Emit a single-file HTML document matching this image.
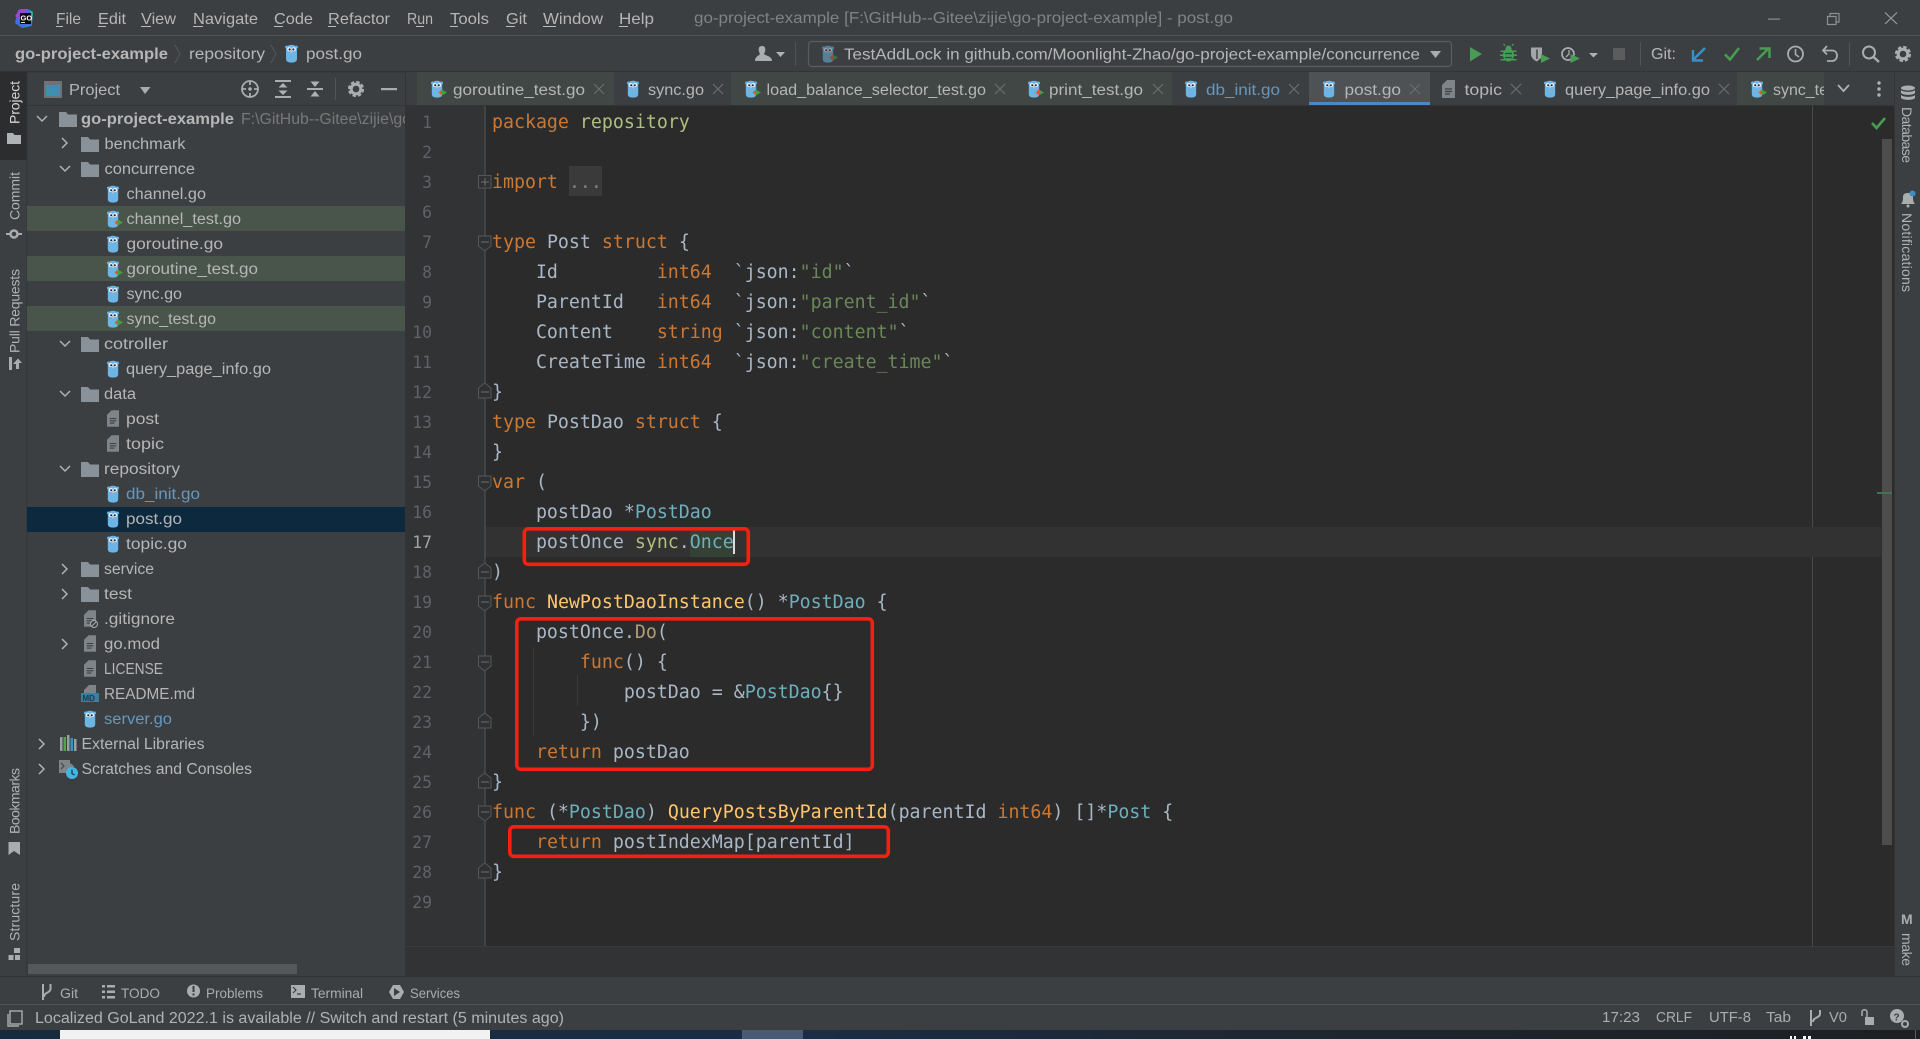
<!DOCTYPE html>
<html><head><meta charset="utf-8"><title>go-project-example - post.go</title>
<style>
html,body{margin:0;padding:0;background:#3c3f41;overflow:hidden}
svg{display:block}
text{font-family:"Liberation Sans",sans-serif;font-size:15.5px;fill:#b6b6b6;white-space:pre}
.m{font-size:16px;fill:#b6b6b6}
.b{font-weight:bold}
.dim{fill:#787878}
.bl{fill:#6897bb}
.sm{font-size:14px;fill:#a9adb0}
.v{font-size:14px;fill:#b0b2b4}
.c{font-family:"DejaVu Sans Mono","Liberation Mono",monospace;font-size:18.25px;fill:#a9b7c6}
.n{font-family:"DejaVu Sans Mono","Liberation Mono",monospace;font-size:16.4px;fill:#606366;text-anchor:end}
.k{fill:#cc7832}.t{fill:#6fafbd}.f{fill:#ffc66d}.s{fill:#6a8759}.p{fill:#afbf7e}.d{fill:#b09d79}.g{fill:#808080}
.x{stroke:#6c6e70;stroke-width:1.2;fill:none}
.ch{stroke:#afb1b3;stroke-width:1.5;fill:none}
.fold{fill:#2f3133;stroke:#55585a;stroke-width:1}
.ic{fill:#afb1b3}
</style></head>
<body>
<svg width="1920" height="1039" viewBox="0 0 1920 1039" xmlns="http://www.w3.org/2000/svg">
<defs>
<symbol id="go" viewBox="0 0 12 18"><circle cx="1.5" cy="3" r="1.5" fill="#6cb5e4"/><circle cx="10.5" cy="3" r="1.5" fill="#6cb5e4"/><path d="M6 .8C9.800 .8 11.200 3 11.200 6V14C11.200 16.500 9.500 17.600 6 17.600S.8 16.500 .8 14V6C.8 3 2.200 .8 6 .8Z" fill="#6cb5e4"/><circle cx="3.800" cy="5" r="2" fill="#eef"/><circle cx="8.200" cy="5" r="2" fill="#eef"/><circle cx="4.200" cy="5.200" r="1" fill="#222"/><circle cx="7.800" cy="5.200" r="1" fill="#222"/><rect x="5.200" y="6.800" width="1.600" height="1.400" fill="#d9c9a8"/></symbol>
<symbol id="gt" viewBox="0 0 17 18"><use href="#go" width="12" height="18"/><path d="M7.500 12.500L11 9.500V15.500Z" fill="#e0592a"/><path d="M11 9.500L16 12.500L11 15.500Z" fill="#4a9a46"/></symbol>
<symbol id="fo" viewBox="0 0 18 15"><path d="M0 0H7L9 2.500H18V15H0Z" fill="#899299"/></symbol>
<symbol id="fi" viewBox="0 0 13 18"><path d="M5 0H13V18H0V5Z" fill="#7e8488"/><path d="M3 9H10M3 11.500H10M3 14H8" stroke="#3c3f41" stroke-width="1.200"/></symbol>
</defs>

<!-- base -->
<rect width="1920" height="1039" fill="#3c3f41"/>
<rect x="0" y="35" width="1920" height="1" fill="#505254"/>
<rect x="0" y="71" width="1920" height="1.500" fill="#323436"/>

<!-- logo -->
<path d="M18 10L28 9L33 12L32 26L22 28L15 23Z" fill="#3f6fe0"/><path d="M15 16L20 9L28 9L20 20Z" fill="#9b45d6"/><path d="M30 10L33 12L32 22L28 26L22 28L30 24Z" fill="#28b79a"/>
<rect x="20" y="13" width="11" height="11" fill="#0b0b0b"/><text x="20.500" y="20.500" style="font-size:7.500px;font-weight:bold;fill:#fff">GO</text><rect x="21" y="22" width="4" height="1" fill="#ddd"/>

<!-- menu -->
<text class="m" x="56" y="24" textLength="25" lengthAdjust="spacingAndGlyphs">File</text>
<text class="m" x="98" y="24" textLength="28" lengthAdjust="spacingAndGlyphs">Edit</text>
<text class="m" x="141" y="24" textLength="35" lengthAdjust="spacingAndGlyphs">View</text>
<text class="m" x="193" y="24" textLength="65" lengthAdjust="spacingAndGlyphs">Navigate</text>
<text class="m" x="274" y="24" textLength="39" lengthAdjust="spacingAndGlyphs">Code</text>
<text class="m" x="328" y="24" textLength="62" lengthAdjust="spacingAndGlyphs">Refactor</text>
<text class="m" x="407" y="24" textLength="26" lengthAdjust="spacingAndGlyphs">Run</text>
<text class="m" x="450" y="24" textLength="39" lengthAdjust="spacingAndGlyphs">Tools</text>
<text class="m" x="506" y="24" textLength="21" lengthAdjust="spacingAndGlyphs">Git</text>
<text class="m" x="543" y="24" textLength="60" lengthAdjust="spacingAndGlyphs">Window</text>
<text class="m" x="619" y="24" textLength="35" lengthAdjust="spacingAndGlyphs">Help</text>
<g fill="#bbbbbb"><rect x="56" y="26" width="7" height="1"/><rect x="98" y="26" width="8" height="1"/><rect x="141" y="26" width="10" height="1"/><rect x="193" y="26" width="10" height="1"/><rect x="274" y="26" width="9" height="1"/><rect x="328" y="26" width="8" height="1"/><rect x="416" y="26" width="8" height="1"/><rect x="450" y="26" width="8" height="1"/><rect x="506" y="26" width="9" height="1"/><rect x="543" y="26" width="13" height="1"/><rect x="619" y="26" width="9" height="1"/></g>
<text x="694" y="23" textLength="539" lengthAdjust="spacingAndGlyphs" style="font-size:16px;fill:#808284">go-project-example [F:\GitHub--Gitee\zijie\go-project-example] - post.go</text>
<!-- window controls -->
<rect x="1768" y="18.500" width="12" height="1.200" fill="#8d8f91"/>
<path d="M1830 16.500H1827.500V24.500H1836V22M1830 16.500V13.500H1839V22H1836M1830 16.500H1836V22" fill="none" stroke="#8d8f91" stroke-width="1.200"/>
<path d="M1885 12.500L1897 24M1897 12.500L1885 24" stroke="#9a9c9e" stroke-width="1.200"/>

<!-- breadcrumb row -->
<text class="b" x="15" y="59" textLength="153" lengthAdjust="spacingAndGlyphs">go-project-example</text>
<path d="M175 45L180 54L175 63" fill="none" stroke="#55585a"/>
<text x="189" y="59" textLength="76" lengthAdjust="spacingAndGlyphs">repository</text>
<path d="M271 45L276 54L271 63" fill="none" stroke="#55585a"/>
<use href="#go" x="285" y="44" width="13" height="19"/>
<text x="306" y="59" textLength="56" lengthAdjust="spacingAndGlyphs">post.go</text>

<!-- toolbar -->
<path d="M755 61C755 56 759 56 760 54C758 50 758 46 762 46C766 46 766 50 764 54C766 56 772 56 772 61Z" fill="#a9adb0"/><path d="M776 52H785L780.500 57Z" class="ic"/>
<rect x="795" y="42" width="1" height="24" fill="#515355"/>
<rect x="808.500" y="41.500" width="643" height="25" rx="3" fill="none" stroke="#5a5d5f" stroke-width="1.200"/>
<g opacity=".55"><use href="#gt" x="822" y="45" width="17" height="18"/></g>
<text x="844" y="59.500" textLength="576" lengthAdjust="spacingAndGlyphs">TestAddLock in github.com/Moonlight-Zhao/go-project-example/concurrence</text>
<path d="M1430 51H1441L1435.500 58Z" fill="#a9adb0"/>
<path d="M1470 47L1482 54L1470 61.500Z" fill="#499c54"/>
<g fill="#499c54"><ellipse cx="1508.500" cy="55" rx="5.500" ry="6.500"/><circle cx="1508.500" cy="48.500" r="3"/><path d="M1505 45.500L1503.500 44M1512 45.500L1513.500 44" stroke="#499c54" stroke-width="1.300"/><path d="M1500.500 50.500h16v1.500h-16zM1500 54.500h17v1.500h-17zM1500.500 59h16v1.500h-16z"/></g><path d="M1505 53.500h7M1505 57.500h7" stroke="#3c3f41" stroke-width="1.200"/>
<path d="M1531 47.500H1542V57L1537 61.500C1533 60 1531 57 1531 54Z" fill="#a3a6a8"/><path d="M1537 49.500V59" stroke="#3c3f41" stroke-width="1.400"/><path d="M1541 54L1550 58.500L1541 63Z" fill="#499c54"/>
<circle cx="1568" cy="54" r="6" fill="none" stroke="#a9adb0" stroke-width="1.700"/><path d="M1569 50V54L1566 57" stroke="#a9adb0" fill="none" stroke-width="1.300"/><path d="M1570.500 54L1580 58.500L1570.500 63Z" fill="#499c54"/>
<path d="M1589 53H1598L1593.500 57.500Z" class="ic"/>
<rect x="1613" y="48" width="12" height="12" fill="#5b5c5c"/>
<rect x="1640" y="42" width="1" height="24" fill="#515355"/>
<text x="1651" y="59" textLength="25" lengthAdjust="spacingAndGlyphs">Git:</text>
<path d="M1705 48L1694 59M1693 50V60.500H1703" fill="none" stroke="#3592c4" stroke-width="2.400"/>
<path d="M1725 54.500L1730 59.500L1739 48" fill="none" stroke="#499c54" stroke-width="2.600"/>
<path d="M1757 60L1769 48M1759.500 48.500H1769.500V58" fill="none" stroke="#499c54" stroke-width="2.400"/>
<circle cx="1795.500" cy="54" r="7.500" fill="none" stroke="#a9adb0" stroke-width="1.800"/><path d="M1795.500 49V54.500L1799 57" fill="none" stroke="#a9adb0" stroke-width="1.600"/>
<path d="M1827 46L1823 50.500L1827 54.500M1823.500 50.500H1832C1835.500 50.500 1837 53 1837 55.500C1837 58.500 1835 61 1832 61H1827" fill="none" stroke="#a9adb0" stroke-width="1.800"/>
<rect x="1849" y="42" width="1" height="24" fill="#515355"/>
<circle cx="1869" cy="52.500" r="6" fill="none" stroke="#a9adb0" stroke-width="2"/><path d="M1873.500 57L1879 62" stroke="#a9adb0" stroke-width="2.400"/>
<circle cx="1903" cy="54" r="4.800" fill="none" stroke="#a9adb0" stroke-width="3"/><circle cx="1903" cy="54" r="7" fill="none" stroke="#a9adb0" stroke-width="2.200" stroke-dasharray="3.500 2"/>

<!-- left stripe -->
<rect x="0" y="72" width="27" height="904" fill="#3c3f41"/>
<rect x="0" y="72" width="27" height="88" fill="#2b2d2e"/>
<rect x="26.500" y="72" width="1" height="904" fill="#323436"/>
<text class="v" style="fill:#d4d6d8" transform="translate(19.500,124) rotate(-90)" textLength="43" lengthAdjust="spacing">Project</text>
<path d="M7 133H13L14.500 135H21V144H7Z" fill="#b0b3b5"/>
<text class="v" transform="translate(19.500,220) rotate(-90)" textLength="48" lengthAdjust="spacing">Commit</text>
<circle cx="14" cy="234" r="3.500" fill="none" stroke="#a9adb0" stroke-width="2.500"/><path d="M6 234H10M18 234H22" stroke="#a9adb0" stroke-width="2"/>
<text class="v" transform="translate(19.500,353) rotate(-90)" textLength="84" lengthAdjust="spacing">Pull Requests</text>
<path d="M9 357H12V370H9Z" fill="#a9adb0"/><path d="M13 364L18 358.500L22 363H19V369H16V364Z" fill="#a9adb0"/>
<text class="v" transform="translate(19.500,834) rotate(-90)" textLength="66" lengthAdjust="spacing">Bookmarks</text>
<path d="M8.500 842H20V855L14 851L8.500 855Z" fill="#a9adb0"/>
<text class="v" transform="translate(19.500,941) rotate(-90)" textLength="58" lengthAdjust="spacing">Structure</text>
<path d="M14 948h6v5h-6zM8.500 955h5v5h-5zM15 955h5v5h-5z" fill="#a9adb0"/>

<!-- project panel -->
<rect x="44" y="81" width="18" height="17" fill="#6e7376"/><rect x="46" y="85" width="14" height="11" fill="#3f8fae"/>
<text x="69" y="95" textLength="51" lengthAdjust="spacingAndGlyphs" style="font-size:16px">Project</text>
<path d="M140 87H150.500L145 94Z" fill="#a9adb0"/>
<circle cx="250" cy="89" r="8" fill="none" stroke="#a9adb0" stroke-width="1.800"/><circle cx="250" cy="89" r="1.800" class="ic"/><path d="M250 81V85M250 93V97M242 89H246M254 89H258" stroke="#a9adb0" stroke-width="1.800"/>
<path d="M275 81H291M275 97H291" stroke="#a9adb0" stroke-width="2"/><path d="M283 83L287.500 87.500H278.500ZM283 95L287.500 90.500H278.500Z" class="ic"/>
<path d="M307 89H323" stroke="#a9adb0" stroke-width="2"/><path d="M315 87L310.500 81.500H319.500ZM315 91L310.500 96.500H319.500Z" class="ic"/>
<rect x="335" y="78" width="1" height="22" fill="#515355"/>
<circle cx="356" cy="89" r="4.800" fill="none" stroke="#a9adb0" stroke-width="3"/><circle cx="356" cy="89" r="7" fill="none" stroke="#a9adb0" stroke-width="2.200" stroke-dasharray="3.500 2"/>
<rect x="381" y="88" width="16" height="2.200" fill="#a9adb0"/>
<rect x="27" y="105" width="378" height="1" fill="#323436"/>

<!-- tree highlights -->
<rect x="27" y="206" width="378" height="25" fill="#49544a"/>
<rect x="27" y="256" width="378" height="25" fill="#49544a"/>
<rect x="27" y="306" width="378" height="25" fill="#49544a"/>
<rect x="27" y="507" width="378" height="25" fill="#0d293e"/>

<!-- tree arrows -->
<g class="ch">
<path d="M37 116L42 121L47 116"/>
<path d="M62 138L67 143L62 148"/>
<path d="M60 166L65 171L70 166"/>
<path d="M60 341L65 346L70 341"/>
<path d="M60 391L65 396L70 391"/>
<path d="M60 466L65 471L70 466"/>
<path d="M62 564L67 569L62 574"/>
<path d="M62 589L67 594L62 599"/>
<path d="M62 639L67 644L62 649"/>
<path d="M39 739L44 744L39 749"/>
<path d="M39 764L44 769L39 774"/>
</g>

<!-- tree icons -->
<use href="#fo" x="59" y="112" width="18" height="15"/>
<use href="#fo" x="81" y="137" width="18" height="15"/>
<use href="#fo" x="81" y="162" width="18" height="15"/>
<use href="#fo" x="81" y="337" width="18" height="15"/>
<use href="#fo" x="81" y="387" width="18" height="15"/>
<use href="#fo" x="81" y="462" width="18" height="15"/>
<use href="#fo" x="81" y="562" width="18" height="15"/>
<use href="#fo" x="81" y="587" width="18" height="15"/>
<use href="#go" x="107" y="185" width="12" height="18"/>
<use href="#gt" x="107" y="210" width="17" height="18"/>
<use href="#go" x="107" y="235" width="12" height="18"/>
<use href="#gt" x="107" y="260" width="17" height="18"/>
<use href="#go" x="107" y="285" width="12" height="18"/>
<use href="#gt" x="107" y="310" width="17" height="18"/>
<use href="#go" x="107" y="360" width="12" height="18"/>
<use href="#fi" x="107" y="410" width="12" height="17"/>
<use href="#fi" x="107" y="435" width="12" height="17"/>
<use href="#go" x="107" y="485" width="12" height="18"/>
<use href="#go" x="107" y="510" width="12" height="18"/>
<use href="#go" x="107" y="535" width="12" height="18"/>
<use href="#fi" x="84" y="610" width="12" height="17"/><circle cx="94" cy="624" r="3.500" fill="#3c3f41" stroke="#a9adb0"/><path d="M92 626L96 622" stroke="#a9adb0"/>
<use href="#fi" x="84" y="635" width="12" height="17"/>
<use href="#fi" x="84" y="660" width="12" height="17"/>
<path d="M89 685H96V695H84V690Z" fill="#7e8488"/><rect x="81" y="693" width="18" height="9" fill="#3a7f9e"/><text x="82.500" y="701" style="font-size:8px;font-weight:bold;fill:#1e3a4a">MD</text>
<use href="#go" x="84" y="710" width="12" height="18"/>
<g><rect x="60" y="737" width="2.500" height="14" fill="#9aa0a4"/><rect x="63.500" y="737" width="2.500" height="14" fill="#4aa84e"/><rect x="67" y="735" width="2.500" height="16" fill="#9aa0a4"/><rect x="70.500" y="738" width="2.500" height="13" fill="#3592c4"/><rect x="74" y="739" width="2.500" height="12" fill="#9aa0a4"/></g>
<path d="M59 760H70V763L74 766L70 773H59Z" fill="#7e8488"/><path d="M61 763L64 766L61 769" stroke="#3c3f41" fill="none"/><circle cx="72" cy="773" r="6" fill="#40b6e0"/><path d="M72 769.500V773.500L74.500 775" stroke="#23303a" fill="none" stroke-width="1.200"/>

<!-- tree text -->
<text class="b" x="81" y="124" textLength="153" lengthAdjust="spacingAndGlyphs">go-project-example</text>
<svg x="241" y="108" width="164" height="24" viewBox="241 108 164 24"><text class="dim" x="241" y="124" textLength="170" lengthAdjust="spacingAndGlyphs">F:\GitHub--Gitee\zijie\go</text></svg>
<text x="104.500" y="149" textLength="81" lengthAdjust="spacingAndGlyphs">benchmark</text>
<text x="104.500" y="174" textLength="90.500" lengthAdjust="spacingAndGlyphs">concurrence</text>
<text x="126.500" y="199" textLength="79.500" lengthAdjust="spacingAndGlyphs">channel.go</text>
<text x="126.500" y="224" textLength="114.500" lengthAdjust="spacingAndGlyphs">channel_test.go</text>
<text x="126.500" y="249" textLength="96.500" lengthAdjust="spacingAndGlyphs">goroutine.go</text>
<text x="126.500" y="274" textLength="131.500" lengthAdjust="spacingAndGlyphs">goroutine_test.go</text>
<text x="126.500" y="299" textLength="55.500" lengthAdjust="spacingAndGlyphs">sync.go</text>
<text x="126.500" y="324" textLength="89.500" lengthAdjust="spacingAndGlyphs">sync_test.go</text>
<text x="104" y="349" textLength="64" lengthAdjust="spacingAndGlyphs">cotroller</text>
<text x="126" y="374" textLength="145" lengthAdjust="spacingAndGlyphs">query_page_info.go</text>
<text x="104" y="399" textLength="32" lengthAdjust="spacingAndGlyphs">data</text>
<text x="126" y="424" textLength="33" lengthAdjust="spacingAndGlyphs">post</text>
<text x="126" y="449" textLength="38" lengthAdjust="spacingAndGlyphs">topic</text>
<text x="104" y="474" textLength="76" lengthAdjust="spacingAndGlyphs">repository</text>
<text class="bl" x="126" y="499" textLength="74" lengthAdjust="spacingAndGlyphs">db_init.go</text>
<text x="126" y="524" textLength="56" lengthAdjust="spacingAndGlyphs">post.go</text>
<text x="126" y="549" textLength="61" lengthAdjust="spacingAndGlyphs">topic.go</text>
<text x="104" y="574" textLength="50" lengthAdjust="spacingAndGlyphs">service</text>
<text x="104" y="599" textLength="28" lengthAdjust="spacingAndGlyphs">test</text>
<text x="104" y="624" textLength="71" lengthAdjust="spacingAndGlyphs">.gitignore</text>
<text x="104" y="649" textLength="56" lengthAdjust="spacingAndGlyphs">go.mod</text>
<text x="104" y="674" textLength="59" lengthAdjust="spacingAndGlyphs">LICENSE</text>
<text x="104" y="699" textLength="91" lengthAdjust="spacingAndGlyphs">README.md</text>
<text class="bl" x="104" y="724" textLength="68" lengthAdjust="spacingAndGlyphs">server.go</text>
<text x="81.500" y="749" textLength="123" lengthAdjust="spacingAndGlyphs">External Libraries</text>
<text x="81.500" y="774" textLength="170.500" lengthAdjust="spacingAndGlyphs">Scratches and Consoles</text>
<rect x="28" y="964" width="269" height="10" fill="#55585a"/>

<!-- editor backgrounds -->
<rect x="405" y="72" width="1" height="904" fill="#323436"/>
<rect x="406" y="106" width="1488" height="840" fill="#2b2b2b"/>
<rect x="406" y="106" width="79" height="840" fill="#313335"/>
<rect x="406" y="946" width="1488" height="30" fill="#313335"/>
<rect x="406" y="946" width="1488" height="1" fill="#3a3c3e"/>
<rect x="484.500" y="106" width="1" height="840" fill="#55585a"/>
<rect x="1812" y="106" width="1" height="840" fill="#4a4a4a"/>
<rect x="485.500" y="527" width="1396" height="30" fill="#323232"/>
<rect x="1882" y="139" width="10" height="706" fill="#4d4d4d"/>
<path d="M1872 123L1876.500 128L1885 118" fill="none" stroke="#499c54" stroke-width="2.600"/>
<rect x="1877" y="492" width="15" height="2" fill="#447152"/>

<!-- tab bar -->
<rect x="406" y="72" width="1488" height="33" fill="#3c3f41"/>
<rect x="417" y="72" width="197" height="33" fill="#414745"/>
<rect x="731" y="72" width="441" height="33" fill="#414745"/>
<rect x="1309" y="72" width="121" height="33" fill="#4e5254"/>
<rect x="1309" y="102" width="121" height="3" fill="#4a88c7"/>
<rect x="1737" y="72" width="87" height="33" fill="#414745"/>
<rect x="406" y="105" width="1488" height="1" fill="#323436"/>

<use href="#gt" x="431" y="80" width="17" height="18"/>
<text x="453" y="95" textLength="132" lengthAdjust="spacingAndGlyphs">goroutine_test.go</text>
<path class="x" d="M594 84L604 94M604 84L594 94"/>
<use href="#go" x="627" y="80" width="12" height="18"/>
<text x="648" y="95" textLength="56" lengthAdjust="spacingAndGlyphs">sync.go</text>
<path class="x" d="M713 84L723 94M723 84L713 94"/>
<use href="#gt" x="745" y="80" width="17" height="18"/>
<text x="766.500" y="95" textLength="219.500" lengthAdjust="spacingAndGlyphs">load_balance_selector_test.go</text>
<path class="x" d="M995 84L1005 94M1005 84L995 94"/>
<use href="#gt" x="1028" y="80" width="17" height="18"/>
<text x="1049" y="95" textLength="94" lengthAdjust="spacingAndGlyphs">print_test.go</text>
<path class="x" d="M1153 84L1163 94M1163 84L1153 94"/>
<use href="#go" x="1185" y="80" width="12" height="18"/>
<text class="bl" x="1206" y="95" textLength="74" lengthAdjust="spacingAndGlyphs">db_init.go</text>
<path class="x" d="M1289 84L1299 94M1299 84L1289 94"/>
<use href="#go" x="1323" y="80" width="12" height="18"/>
<text x="1344.500" y="95" textLength="56.500" lengthAdjust="spacingAndGlyphs">post.go</text>
<path class="x" d="M1410 84L1420 94M1420 84L1410 94"/>
<use href="#fi" x="1442" y="80" width="13" height="18"/>
<text x="1464.500" y="95" textLength="37.500" lengthAdjust="spacingAndGlyphs">topic</text>
<path class="x" d="M1511 84L1521 94M1521 84L1511 94"/>
<use href="#go" x="1544" y="80" width="12" height="18"/>
<text x="1565" y="95" textLength="145" lengthAdjust="spacingAndGlyphs">query_page_info.go</text>
<path class="x" d="M1719 84L1729 94M1729 84L1719 94"/>
<use href="#gt" x="1751" y="80" width="17" height="18"/>
<svg x="1773" y="72" width="51" height="33" viewBox="1773 72 51 33"><text x="1773" y="95" textLength="89.500" lengthAdjust="spacingAndGlyphs">sync_test.go</text></svg>
<path d="M1838 85L1843.500 91L1849 85" fill="none" stroke="#afb1b3" stroke-width="1.800"/>
<circle cx="1879" cy="83" r="1.700" class="ic"/><circle cx="1879" cy="89" r="1.700" class="ic"/><circle cx="1879" cy="95" r="1.700" class="ic"/>

<!-- line numbers -->
<g>
<text class="n" x="432" y="128">1</text><text class="n" x="432" y="158">2</text><text class="n" x="432" y="188">3</text><text class="n" x="432" y="218">6</text><text class="n" x="432" y="248">7</text><text class="n" x="432" y="278">8</text><text class="n" x="432" y="308">9</text><text class="n" x="432" y="338">10</text><text class="n" x="432" y="368">11</text><text class="n" x="432" y="398">12</text><text class="n" x="432" y="428">13</text><text class="n" x="432" y="458">14</text><text class="n" x="432" y="488">15</text><text class="n" x="432" y="518">16</text><text class="n" x="432" y="548" style="fill:#a4a3a3">17</text><text class="n" x="432" y="578">18</text><text class="n" x="432" y="608">19</text><text class="n" x="432" y="638">20</text><text class="n" x="432" y="668">21</text><text class="n" x="432" y="698">22</text><text class="n" x="432" y="728">23</text><text class="n" x="432" y="758">24</text><text class="n" x="432" y="788">25</text><text class="n" x="432" y="818">26</text><text class="n" x="432" y="848">27</text><text class="n" x="432" y="878">28</text><text class="n" x="432" y="908">29</text>
</g>

<!-- fold markers -->
<g class="fold">
<rect x="478.500" y="175.500" width="12.500" height="12.500"/>
<path d="M478.500 236H491V246L484.750 251L478.500 246Z"/>
<path d="M478.500 476H491V486L484.750 491L478.500 486Z"/>
<path d="M478.500 596H491V606L484.750 611L478.500 606Z"/>
<path d="M478.500 656H491V666L484.750 671L478.500 666Z"/>
<path d="M478.500 806H491V816L484.750 821L478.500 816Z"/>
<path d="M478.500 398H491V388L484.750 383L478.500 388Z"/>
<path d="M478.500 578H491V568L484.750 563L478.500 568Z"/>
<path d="M478.500 728H491V718L484.750 713L478.500 718Z"/>
<path d="M478.500 788H491V778L484.750 773L478.500 778Z"/>
<path d="M478.500 878H491V868L484.750 863L478.500 868Z"/>
</g>
<path d="M481 182H489M485 178V186M481 242H489M481 482H489M481 602H489M481 662H489M481 812H489M481 392H489M481 572H489M481 722H489M481 782H489M481 872H489" stroke="#6d7072" stroke-width="1"/>

<!-- indent guides + highlights -->
<rect x="533" y="647" width="1" height="89" fill="#3b3b3b"/>
<rect x="577" y="675" width="1" height="31" fill="#3b3b3b"/>
<rect x="569" y="166" width="33" height="30" fill="#3a3a3a"/>
<rect x="690" y="527" width="44" height="30" fill="#344134"/>

<!-- code -->
<text class="c" x="492" y="128"><tspan class="k">package</tspan> <tspan class="p">repository</tspan></text>
<text class="c" x="492" y="188"><tspan class="k">import</tspan> <tspan class="g">...</tspan></text>
<text class="c" x="492" y="248"><tspan class="k">type</tspan> Post <tspan class="k">struct</tspan> {</text>
<text class="c" x="492" y="278">    Id         <tspan class="k">int64</tspan>  `json:<tspan class="s">"id"</tspan>`</text>
<text class="c" x="492" y="308">    ParentId   <tspan class="k">int64</tspan>  `json:<tspan class="s">"parent_id"</tspan>`</text>
<text class="c" x="492" y="338">    Content    <tspan class="k">string</tspan> `json:<tspan class="s">"content"</tspan>`</text>
<text class="c" x="492" y="368">    CreateTime <tspan class="k">int64</tspan>  `json:<tspan class="s">"create_time"</tspan>`</text>
<text class="c" x="492" y="398">}</text>
<text class="c" x="492" y="428"><tspan class="k">type</tspan> PostDao <tspan class="k">struct</tspan> {</text>
<text class="c" x="492" y="458">}</text>
<text class="c" x="492" y="488"><tspan class="k">var</tspan> (</text>
<text class="c" x="492" y="518">    postDao *<tspan class="t">PostDao</tspan></text>
<text class="c" x="492" y="548">    postOnce <tspan class="p">sync</tspan>.<tspan class="t">Once</tspan></text>
<text class="c" x="492" y="578">)</text>
<text class="c" x="492" y="608"><tspan class="k">func</tspan> <tspan class="f">NewPostDaoInstance</tspan>() *<tspan class="t">PostDao</tspan> {</text>
<text class="c" x="492" y="638">    postOnce.<tspan class="d">Do</tspan>(</text>
<text class="c" x="492" y="668">        <tspan class="k">func</tspan>() {</text>
<text class="c" x="492" y="698">            postDao = &amp;<tspan class="t">PostDao</tspan>{}</text>
<text class="c" x="492" y="728">        })</text>
<text class="c" x="492" y="758">    <tspan class="k">return</tspan> postDao</text>
<text class="c" x="492" y="788">}</text>
<text class="c" x="492" y="818"><tspan class="k">func</tspan> (*<tspan class="t">PostDao</tspan>) <tspan class="f">QueryPostsByParentId</tspan>(parentId <tspan class="k">int64</tspan>) []*<tspan class="t">Post</tspan> {</text>
<text class="c" x="492" y="848">    <tspan class="k">return</tspan> postIndexMap[parentId]</text>
<text class="c" x="492" y="878">}</text>
<rect x="733" y="530" width="2" height="24" fill="#dddddd"/>

<!-- red annotation boxes -->
<g fill="none" stroke="#f5200f" stroke-width="3.600">
<rect x="524.300" y="528.800" width="224" height="35.500" rx="4"/>
<rect x="516.800" y="618.800" width="355.500" height="150.500" rx="4"/>
<rect x="509.800" y="826.800" width="378.500" height="29.500" rx="4"/>
</g>

<!-- right stripe -->
<rect x="1894" y="72" width="26" height="904" fill="#3c3f41"/>
<rect x="1894" y="72" width="1" height="904" fill="#323436"/>
<g fill="#a9adb0"><ellipse cx="1908" cy="88" rx="7" ry="2.500"/><path d="M1901 90C1903 92.500 1913 92.500 1915 90V93C1913 95.500 1903 95.500 1901 93Z"/><path d="M1901 95C1903 97.500 1913 97.500 1915 95V98C1913 100.500 1903 100.500 1901 98Z"/></g>
<text class="v" transform="translate(1902,107) rotate(90)" textLength="56" lengthAdjust="spacing">Database</text>
<path d="M1901 204C1903 202 1903 199 1903 197C1903 194 1905 193 1908 193C1911 193 1913 194 1913 197C1913 199 1913 202 1915 204Z" fill="#a9adb0"/><circle cx="1908" cy="206" r="1.500" fill="#a9adb0"/><circle cx="1912.500" cy="193.500" r="3" fill="#3592c4"/>
<text class="v" transform="translate(1902,213) rotate(90)" textLength="79" lengthAdjust="spacing">Notifications</text>
<text x="1901" y="924" style="font-size:14px;font-weight:bold;fill:#a9adb0">M</text>
<text class="v" transform="translate(1902,933) rotate(90)" textLength="33" lengthAdjust="spacing">make</text>

<!-- bottom tool bar -->
<rect x="0" y="976" width="1920" height="1" fill="#323436"/>
<path d="M43 984V1000M50.500 984V989C50.500 993 44 992 44 997" fill="none" stroke="#a9adb0" stroke-width="2"/>
<text class="sm" x="60" y="998" textLength="18" lengthAdjust="spacingAndGlyphs">Git</text>
<path d="M102 985h3v2.500h-3zM102 990.500h3v2.500h-3zM102 996h3v2.500h-3zM107 985h8v2.500h-8zM107 990.500h8v2.500h-8zM107 996h8v2.500h-8z" fill="#a9adb0"/>
<text class="sm" x="121" y="998" textLength="39" lengthAdjust="spacingAndGlyphs">TODO</text>
<circle cx="193.500" cy="991" r="6.500" fill="#a9adb0"/><rect x="192.500" y="986" width="2" height="6" fill="#3c3f41"/><rect x="192.500" y="993.500" width="2" height="2" fill="#3c3f41"/>
<text class="sm" x="206" y="998" textLength="57" lengthAdjust="spacingAndGlyphs">Problems</text>
<rect x="291" y="985" width="14" height="13" fill="#a9adb0"/><path d="M293 987L296 990L293 993M297 994H301" stroke="#3c3f41" fill="none" stroke-width="1.200"/>
<text class="sm" x="311" y="998" textLength="52" lengthAdjust="spacingAndGlyphs">Terminal</text>
<path d="M393 985H400L404 992L400 999H393L389 992Z" fill="#a9adb0"/><path d="M394 988L400 992L394 996Z" fill="#3c3f41"/>
<text class="sm" x="410" y="998" textLength="50" lengthAdjust="spacingAndGlyphs">Services</text>

<!-- status bar -->
<rect x="0" y="1004" width="1920" height="1" fill="#505254"/>
<rect x="10" y="1011" width="12" height="13" fill="none" stroke="#a9adb0" stroke-width="1.400"/><path d="M8 1014V1026H19" fill="none" stroke="#a9adb0" stroke-width="1.400"/>
<text x="35" y="1023" textLength="529" lengthAdjust="spacingAndGlyphs" style="font-size:15.500px;fill:#b0b2b4">Localized GoLand 2022.1 is available // Switch and restart (5 minutes ago)</text>
<text x="1602" y="1022" textLength="38" lengthAdjust="spacingAndGlyphs" style="font-size:14.500px;fill:#a9adb0">17:23</text>
<text x="1656" y="1022" textLength="36" lengthAdjust="spacingAndGlyphs" style="font-size:14.500px;fill:#a9adb0">CRLF</text>
<text x="1709" y="1022" textLength="42" lengthAdjust="spacingAndGlyphs" style="font-size:14.500px;fill:#a9adb0">UTF-8</text>
<text x="1766" y="1022" textLength="25" lengthAdjust="spacingAndGlyphs" style="font-size:14.500px;fill:#a9adb0">Tab</text>
<path d="M1811 1010V1026M1820 1010V1014C1820 1018 1813 1017 1813 1022" fill="none" stroke="#a9adb0" stroke-width="2"/>
<text x="1829" y="1022" textLength="18" lengthAdjust="spacingAndGlyphs" style="font-size:14.500px;fill:#a9adb0">V0</text>
<rect x="1865" y="1017" width="9" height="8" fill="#a9adb0"/><path d="M1862 1016V1012C1862 1009 1867 1009 1867 1012V1017" fill="none" stroke="#a9adb0" stroke-width="1.500"/>
<circle cx="1897" cy="1016" r="7" fill="#a9adb0"/><text x="1893.500" y="1020.500" style="font-size:10px;font-weight:bold;fill:#3c3f41">?</text><circle cx="1905" cy="1024" r="3" fill="none" stroke="#a9adb0" stroke-width="2"/>

<!-- taskbar -->
<defs><linearGradient id="tb" x1="0" x2="1" y1="0" y2="0"><stop offset="0" stop-color="#172a3d"/><stop offset=".42" stop-color="#1b2c44"/><stop offset=".62" stop-color="#1e2733"/><stop offset="1" stop-color="#1d1f22"/></linearGradient></defs>
<rect x="0" y="1030" width="1920" height="9" fill="url(#tb)"/>
<rect x="60" y="1030" width="430" height="9" fill="#f2f2f2"/>
<rect x="742" y="1030" width="61" height="9" fill="#4a5a74"/>
<path d="M1790 1039v-3h2v3zM1794 1039v-3h2v3zM1803 1039v-3h3v3zM1808 1039v-3h3v3z" fill="#fff"/>
<rect x="1915" y="1030" width="1" height="9" fill="#5a5c5e"/>
</svg>
</body></html>
